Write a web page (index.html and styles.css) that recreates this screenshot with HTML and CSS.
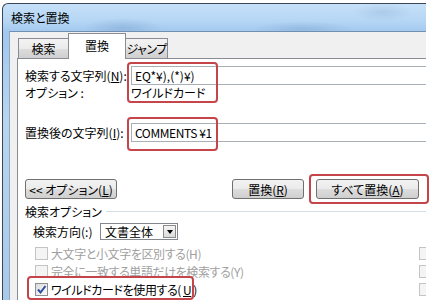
FILE: index.html
```html
<!DOCTYPE html>
<html lang="ja">
<head>
  <meta charset="UTF-8" />
  <title>検索と置換</title>
  <link rel="stylesheet" href="styles.css">
</head>
<body>

<div class="window">
  <div class="titlebar">検索と置換</div>
  <div class="frame">
    <div class="client">

      <div class="tabs">
        <div class="tab tab-first">検索</div>
        <div class="tab tab-active">置換</div>
        <div class="tab tab-last">ジャンプ</div>
      </div>

      <div class="panel">
        <div class="row row-input">
          <span class="lbl">検索する文字列(<u>N</u>):</span>
          <div class="field">EQ*¥),(*)¥)</div>
        </div>
        <div class="row row-opt">
          <span class="lbl">オプション :</span>
          <span>ワイルドカード</span>
        </div>
        <div class="row row-input row-replace">
          <span class="lbl">置換後の文字列(<u>I</u>):</span>
          <div class="field field-latin">COMMENTS ¥1</div>
        </div>

        <div class="row buttons">
          <div class="btn btn-more">&lt;&lt; オプション(<u>L</u>)</div>
          <div class="btn btn-replace">置換(<u>R</u>)</div>
          <div class="btn btn-all">すべて置換(<u>A</u>)</div>
        </div>

        <div class="row group-head">
          <span>検索オプション</span>
          <div class="group-line"></div>
        </div>

        <div class="row direction">
          <span class="dir-lbl">検索方向(:)</span>
          <div class="select">
            <span class="select-text">文書全体</span>
            <span class="select-btn"><span class="arrow"></span></span>
          </div>
        </div>

        <div class="checks">
          <div class="check disabled"><span class="box"></span>大文字と小文字を区別する(H)</div>
          <div class="check disabled"><span class="box"></span></div>
          <div class="check disabled"><span class="box"></span>完全に一致する単語だけを検索する(Y)</div>
          <div class="check disabled"><span class="box"></span></div>
          <div class="check">
            <span class="box box-on">
              <svg width="11" height="11" viewBox="0 0 11 11"><path d="M2 5.5 L4.5 8.5 L9.5 2" fill="none" stroke="#2a4c9c" stroke-width="2"/></svg>
            </span>ワイルドカードを使用する(<u>U</u>)
          </div>
          <div class="check disabled"><span class="box"></span></div>
          <div class="check disabled"><span class="box"></span></div>
          <div class="check disabled"><span class="box"></span></div>
        </div>
      </div>

    </div>
  </div>
</div>

<!-- annotation boxes drawn over the dialog -->
<div class="mark mark-find"></div>
<div class="mark mark-replace"></div>
<div class="mark mark-all"></div>
<div class="mark mark-wild"></div>

</body>
</html>
```

FILE: styles.css
```css
body {
  margin: 0;
  background: #fff;
  font-family: "Noto Sans CJK JP", "Liberation Sans", sans-serif;
  font-size: 12px;
  font-feature-settings: "palt";
  color: #000;
}
u {
  text-decoration: underline;
  text-underline-offset: 1px;
}

.window {
  margin: 3px 0 0 2px;
  width: 423px;
  height: 296px;
  border-top: 1px solid #3a4656;
  border-left: 1px solid #3a4656;
  border-radius: 6px 0 0 0;
  overflow: hidden;
  display: flex;
  flex-direction: column;
  background:
    radial-gradient(ellipse 40px 10px at 120px 24px, rgba(120,160,205,0.45), transparent),
    radial-gradient(ellipse 50px 8px at 300px 25px, rgba(120,160,205,0.4), transparent),
    radial-gradient(ellipse 30px 9px at 380px 8px, rgba(140,175,215,0.35), transparent),
    linear-gradient(to bottom, #c6e0f8, #b4d5f4 18px, #a2c8ee 28px, #b9d5ee 120px, #a9c9e8 300px);
}
.titlebar {
  height: 27px;
  padding-left: 8px;
  display: flex;
  align-items: center;
  font-size: 12px;
  flex-shrink: 0;
}
.frame {
  flex: 1;
  padding-left: 6px;
  display: flex;
  min-height: 0;
}
.client {
  flex: 1;
  background: #f0f0f0;
  border-top: 1px solid #7390b0;
  border-left: 1px solid #8ea7c2;
  padding-left: 7px;
  display: flex;
  flex-direction: column;
  min-width: 0;
}

/* tabs */
.tabs {
  height: 26px;
  display: flex;
  align-items: flex-end;
  padding-left: 1px;
  flex-shrink: 0;
}
.tab {
  box-sizing: border-box;
  height: 20px;
  border: 1px solid #898c95;
  border-bottom: none;
  background: linear-gradient(to bottom, #f3f3f3, #ebebeb 50%, #dddddd 51%, #cfcfcf);
  display: flex;
  align-items: center;
  justify-content: center;
  white-space: nowrap;
}
.tab-first {
  width: 50px;
  border-right: none;
}
.tab-active {
  position: relative;
  width: 58px;
  height: 26px;
  margin-bottom: -1px;
  background: #fff;
  padding-bottom: 2px;
}
.tab-last {
  width: 42px;
  border-left: none;
  letter-spacing: -0.5px;
}

.panel {
  flex: 1;
  background: #fff;
  border-top: 1px solid #898c95;
  border-left: 1px solid #898c95;
  padding: 7px 0 0 7px;
}
.row {
  display: flex;
  align-items: center;
}
.lbl {
  width: 106px;
  flex-shrink: 0;
}
.row-input {
  height: 19px;
}
.row-opt {
  height: 14px;
}
.row-replace {
  margin-top: 24px;
}
.field {
  box-sizing: border-box;
  flex: 1;
  height: 19px;
  margin-right: -6px;
  border: 1px solid #a9afb7;
  padding-left: 3px;
  display: flex;
  align-items: center;
}
.field-latin {
  letter-spacing: -0.4px;
}

/* buttons */
.buttons {
  margin-top: 37px;
  height: 20px;
}
.btn {
  box-sizing: border-box;
  height: 20px;
  border: 1px solid #707070;
  border-radius: 3px;
  background: linear-gradient(to bottom, #f2f2f2, #ebebeb 50%, #dddddd 51%, #cfcfcf);
  display: flex;
  align-items: center;
  justify-content: center;
}
.btn-more {
  width: 92px;
}
.btn-replace {
  width: 72px;
  margin-left: 115px;
}
.btn-all {
  width: 103px;
  margin-left: 12px;
}

/* search options */
.group-head {
  margin-top: 6px;
  height: 12px;
}
.group-line {
  flex: 1;
  height: 1px;
  margin: 1px 0 0 4px;
  background: #d5dfe5;
}
.direction {
  margin-top: 6px;
  height: 17px;
  padding-left: 8px;
}
.dir-lbl {
  width: 67px;
}
.select {
  box-sizing: border-box;
  width: 78px;
  height: 17px;
  border: 1px solid #828790;
  display: flex;
  align-items: center;
  padding: 0 1px 0 4px;
}
.select-text {
  flex: 1;
}
.select-btn {
  box-sizing: border-box;
  width: 13px;
  height: 13px;
  border: 1px solid #8b8b8b;
  background: linear-gradient(to bottom, #f4f4f4, #dcdcdc);
  display: flex;
  align-items: center;
  justify-content: center;
}
.arrow {
  width: 0;
  height: 0;
  border-left: 3px solid transparent;
  border-right: 3px solid transparent;
  border-top: 4px solid #000;
}

.checks {
  margin-top: 4px;
  padding-left: 10px;
  display: grid;
  grid-template-columns: 384px 60px;
  grid-auto-rows: 18px;
}
.check {
  display: flex;
  align-items: center;
  gap: 2px;
  white-space: nowrap;
  letter-spacing: -0.4px;
}
.check.disabled {
  color: #a0a0a0;
}
.box {
  box-sizing: border-box;
  width: 13px;
  height: 13px;
  flex-shrink: 0;
  margin-right: 1px;
  border: 1px solid #8e8f8f;
  background: linear-gradient(135deg, #dcdcdc, #fbfbfb);
  display: flex;
  align-items: center;
  justify-content: center;
}
.disabled .box {
  border-color: #c4c4c4;
  background: #f4f4f4;
}

/* red annotation boxes */
.mark {
  position: absolute;
  border: 2px solid #c4454a;
  border-radius: 4px;
  box-sizing: border-box;
}
.mark-find {
  left: 127px;
  top: 62px;
  width: 91px;
  height: 41px;
}
.mark-replace {
  left: 127px;
  top: 117px;
  width: 91px;
  height: 34px;
}
.mark-all {
  left: 309px;
  top: 174px;
  width: 120px;
  height: 30px;
}
.mark-wild {
  left: 27px;
  top: 276px;
  width: 167px;
  height: 24px;
}
```
